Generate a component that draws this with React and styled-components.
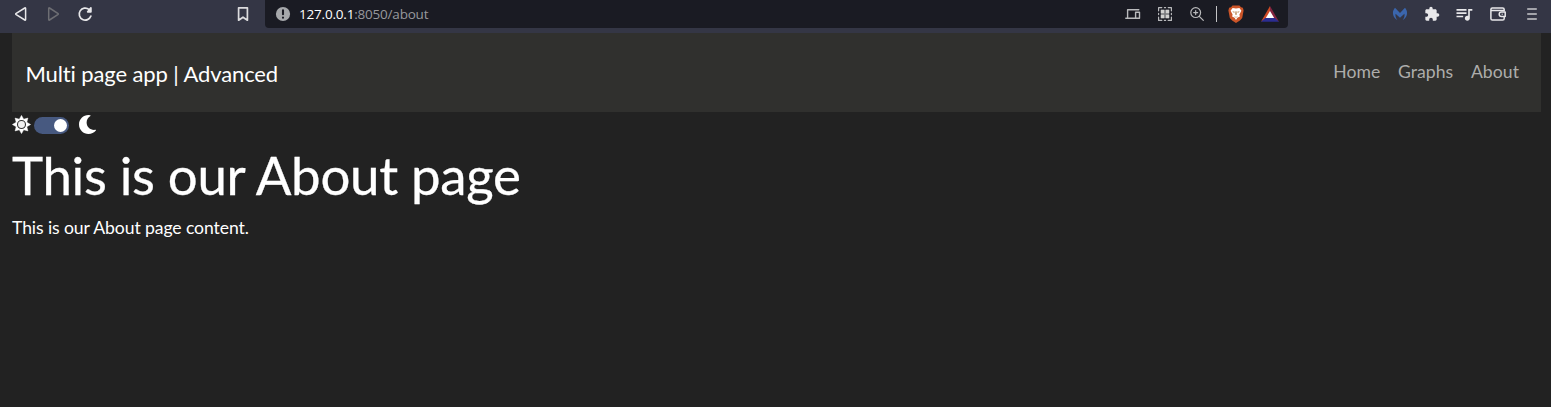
import React from "react";
import styled, { createGlobalStyle } from "styled-components";
import { FaMoon } from "react-icons/fa";
import { MdExtension, MdQueueMusic } from "react-icons/md";

const GlobalStyle = createGlobalStyle`
  * { box-sizing: border-box; }
  body { margin: 0; background: #222222; color: #fff; font-family: Lato, sans-serif; font-size: 17.6px; line-height: 1.5; font-variant-ligatures: none; }
`;
const Window = styled.div`
  height: 407px;
  overflow: hidden;
`;
const Toolbar = styled.header`
  height: 33px;
  display: flex;
  align-items: flex-start;
  padding-left: 5px;
  background: #343645;
`;
const Slot = styled.span`
  width: 32px;
  height: 28px;
  flex: none;
  display: flex;
  align-items: center;
  justify-content: center;
  margin-left: ${(p) => p.$gap || 0}px;
  color: ${(p) => p.$color || "#e8e8ea"};
  svg { display: block; }
`;
const AddressBar = styled.div`
  width: 1023px;
  height: 28px;
  margin: 0 96px 0 6px;
  padding: 0 2px;
  flex: none;
  display: flex;
  align-items: center;
  background: #1a1b23;
  border-radius: 0 0 4px 4px;
`;
const Url = styled.span`
  flex: 1;
  font: 13.5px/20px "Open Sans", sans-serif;
  letter-spacing: -0.2px;
  color: #97989d;
  b { font-weight: 400; color: #fff; }
`;
const Divider = styled.i`
  width: 1px;
  height: 16px;
  margin: 0 3px;
  background: #c4c4c6;
`;
const Page = styled.main`
  padding: 0 10px 0 12px;
`;
const Navbar = styled.nav`
  height: 79px;
  padding: 0 22px 0 13.4px;
  display: flex;
  justify-content: space-between;
  background: #30302e;
`;
const Brand = styled.span`
  padding-top: 24px;
  font-size: 22px;
  line-height: 33px;
  letter-spacing: -0.11px;
`;
const NavLinks = styled.div`
  display: flex;
  gap: 17.6px;
  padding-top: 26px;
  line-height: 26px;
`;
const NavLink = styled.a`
  color: #adadab;
  letter-spacing: 0.06px;
`;
const ThemeSwitch = styled.div`
  height: 25px;
  display: flex;
  align-items: center;
  svg { display: block; margin-bottom: 1px; }
`;
const Track = styled.span`
  width: 35px;
  height: 17px;
  margin: 2px 9px 0 3px;
  padding: 2px;
  display: flex;
  justify-content: flex-end;
  border-radius: 9px;
  background: #475980;
`;
const Knob = styled.span`
  width: 13px;
  height: 13px;
  border-radius: 50%;
  background: #fff;
`;
const Title = styled.h1`
  margin: 6px 0 9px;
  font-size: 52.8px;
  font-weight: 400;
  line-height: 63px;
  letter-spacing: -0.31px;
  -webkit-text-stroke: 0.3px #fff;
`;
const Copy = styled.p`
  margin: 0;
  line-height: 26px;
  letter-spacing: -0.1px;
`;

const Icon = ({ size = 16, width = 1.5, children }) => (
  <svg width={size} height={size} viewBox={`0 0 ${size} ${size}`} fill="none" stroke="currentColor" strokeWidth={width} strokeLinejoin="round" strokeLinecap="round">
    {children}
  </svg>
);

const Back = () => <Icon><path d="M12.6 2.4v11.2q0 .8-.8.4L3.2 8.7q-1-.7 0-1.4L11.8 2q.8-.4.8.4Z" /></Icon>;
const Forward = () => <Icon><path d="M3.7 2.4v11.2q0 .8.8.4l8.3-5.3q1-.7 0-1.4L4.5 2q-.8-.4-.8.4Z" /></Icon>;
const Reload = () => (
  <Icon width={1.7}>
    <path d="M12 3.4A6 6 0 1 0 13.9 10" />
    <path d="M13.9 1.9v3.9h-3.2Z" fill="currentColor" />
  </Icon>
);
const Bookmark = () => <Icon width={1.7}><path d="M3.6 1.8h8.8v12.4L8 11.2l-4.4 3Z" /></Icon>;
const Info = () => (
  <Icon>
    <circle cx="8" cy="8" r="7.1" fill="currentColor" stroke="none" />
    <path d="M8 4.3v3.9M8 11.5v.2" stroke="#1a1b23" strokeWidth="2.1" />
  </Icon>
);
const Devices = () => (
  <Icon width={1.4}>
    <path d="M2.6 11V3.8h11.2M.8 12.3h9M10.6 6.2h3.9v6.1h-3.9Z" />
  </Icon>
);
const QrCode = () => (
  <Icon width={1.2}>
    <path d="M1.6 4.8V1.6h3.2M11.2 1.6h3.2v3.2M14.4 11.2v3.2h-3.2M4.8 14.4H1.6v-3.2M7.4 1.6h1.2M7.4 14.4h1.2M1.6 7.4v1.2M14.4 7.4v1.2" />
    <path d="M3.8 3.8h8.4v8.4H3.8Z" fill="#77787c" stroke="none" />
    <path d="M3.8 3.8h3.4v3.4H3.8ZM8.8 3.8h3.4v3.4H8.8ZM3.8 8.8h3.4v3.4H3.8ZM8.8 8.8h3.4v3.4H8.8Z" fill="#d0d0d0" stroke="none" />
  </Icon>
);
const Zoom = () => (
  <Icon width={1.2}>
    <circle cx="6.7" cy="6.6" r="4.9" />
    <path d="m10.3 10.3 4 4M4.7 6.6h4M6.7 4.6v4" />
  </Icon>
);
const Lion = () => (
  <svg width="18" height="18" viewBox="0 0 18 18">
    <path d="M5.5.6h7l1.5 1.6 1.9.5.7 2.7-1.4 7.7-2.3 2.4L9 17.9l-3.9-2.4-2.3-2.4L1.4 5.4l.7-2.7L4 2.2Z" fill="#cc5528" />
    <path d="m5.6 3 3.4.6 3.4-.6 2 2.7-2 3.7.5 2-2.5 1.4L9 14.9l-1.4-2.1-2.5-1.4.5-2-2-3.7Z" fill="#fff" />
    <path d="m5.2 6.2 2.6.6-.7 1.3ZM12.8 6.2l-2.6.6.7 1.3ZM8.5 6.2h1l.3 3L9 10.2l-.8-1Z" fill="#b98552" />
    <path d="m6.8 11 2.2.9 2.2-.9L9 12.8Z" fill="#b98552" />
  </svg>
);
const Triangle = () => (
  <svg width="18" height="18" viewBox="0 0 18 18">
    <path d="M9 1 0 16.7l9-5.7Z" fill="#cf4a26" />
    <path d="m9 1 9 15.7L9 11Z" fill="#84243f" />
    <path d="M0 16.7 4.2 12.9h9.6l4.2 3.8Z" fill="#2b2d91" />
    <path d="m9 6 4.2 6.9H4.8Z" fill="#fff" />
  </svg>
);
const Malware = () => (
  <svg width="16" height="16" viewBox="0 0 16 16" fill="#3b66ad">
    <path d="M3 1.8 8 7l5-5.2c3.3 3.6 2.8 9.4-2.5 12.4 1.8-2 2.3-4 1.9-6.4L8 11.8 3.6 7.8c-.4 2.4.1 4.4 1.9 6.4C.2 11.2-.3 5.4 3 1.8Z" />
  </svg>
);
const Wallet = () => (
  <Icon width={1.5}>
    <path d="M14.2 4.8V3.6q0-1.6-1.6-1.6H2.3Q.9 2 .9 3.6v8.8q0 1.6 1.5 1.6h10.2q1.6 0 1.6-1.6v-1.1M1 4.6h12.8" />
    <path d="M15.2 6h-3.6q-2.4 0-2.4 2.2t2.4 2.3h3.6Z" />
    <path d="M12 8.2h.5" strokeWidth="1" />
  </Icon>
);
const Menu = () => <Icon width={1.7}><path d="M3.2 3h9.6M3.2 8h9.6M3.2 13h9.6" strokeLinecap="butt" /></Icon>;
const Sun = () => (
  <svg width="19" height="19" viewBox="0 0 19 19">
    <path d="m9.5.4 2.2 3.8 4.2-1.1-1.1 4.2 3.8 2.2-3.8 2.2 1.1 4.2-4.2-1.1-2.2 3.8-2.2-3.8-4.2 1.1 1.1-4.2L.4 9.5l3.8-2.2-1.1-4.2 4.2 1.1Z" fill="#fff" stroke="#fff" strokeWidth=".5" strokeLinejoin="round" />
    <circle cx="9.5" cy="9.5" r="4" fill="#f0f0f0" stroke="#333" strokeWidth="1.1" />
  </svg>
);

export default function App() {
  return (
    <>
      <GlobalStyle />
      <Window>
        <Toolbar>
          <Slot><Back /></Slot>
          <Slot $color="#6d6e73"><Forward /></Slot>
          <Slot><Reload /></Slot>
          <Slot $gap={126} $color="#dcdcde"><Bookmark /></Slot>
          <AddressBar>
            <Slot $color="#a6a8ab"><Info /></Slot>
            <Url><b>127.0.0.1</b>:8050/about</Url>
            <Slot $color="#b9babc"><Devices /></Slot>
            <Slot $color="#b9babc"><QrCode /></Slot>
            <Slot $color="#b9babc"><Zoom /></Slot>
            <Divider />
            <Slot><Lion /></Slot>
            <Slot $gap={2}><Triangle /></Slot>
          </AddressBar>
          <Slot><Malware /></Slot>
          <Slot><MdExtension size={16} /></Slot>
          <Slot><MdQueueMusic size={20} /></Slot>
          <Slot $gap={2}><Wallet /></Slot>
          <Slot $gap={2} $color="#c8c9cc"><Menu /></Slot>
        </Toolbar>
        <Page>
          <Navbar>
            <Brand>Multi page app | Advanced</Brand>
            <NavLinks>
              <NavLink>Home</NavLink>
              <NavLink>Graphs</NavLink>
              <NavLink>About</NavLink>
            </NavLinks>
          </Navbar>
          <ThemeSwitch>
            <Sun />
            <Track><Knob /></Track>
            <FaMoon size={19} />
          </ThemeSwitch>
          <Title>This is our About page</Title>
          <Copy>This is our About page content.</Copy>
        </Page>
      </Window>
    </>
  );
}
